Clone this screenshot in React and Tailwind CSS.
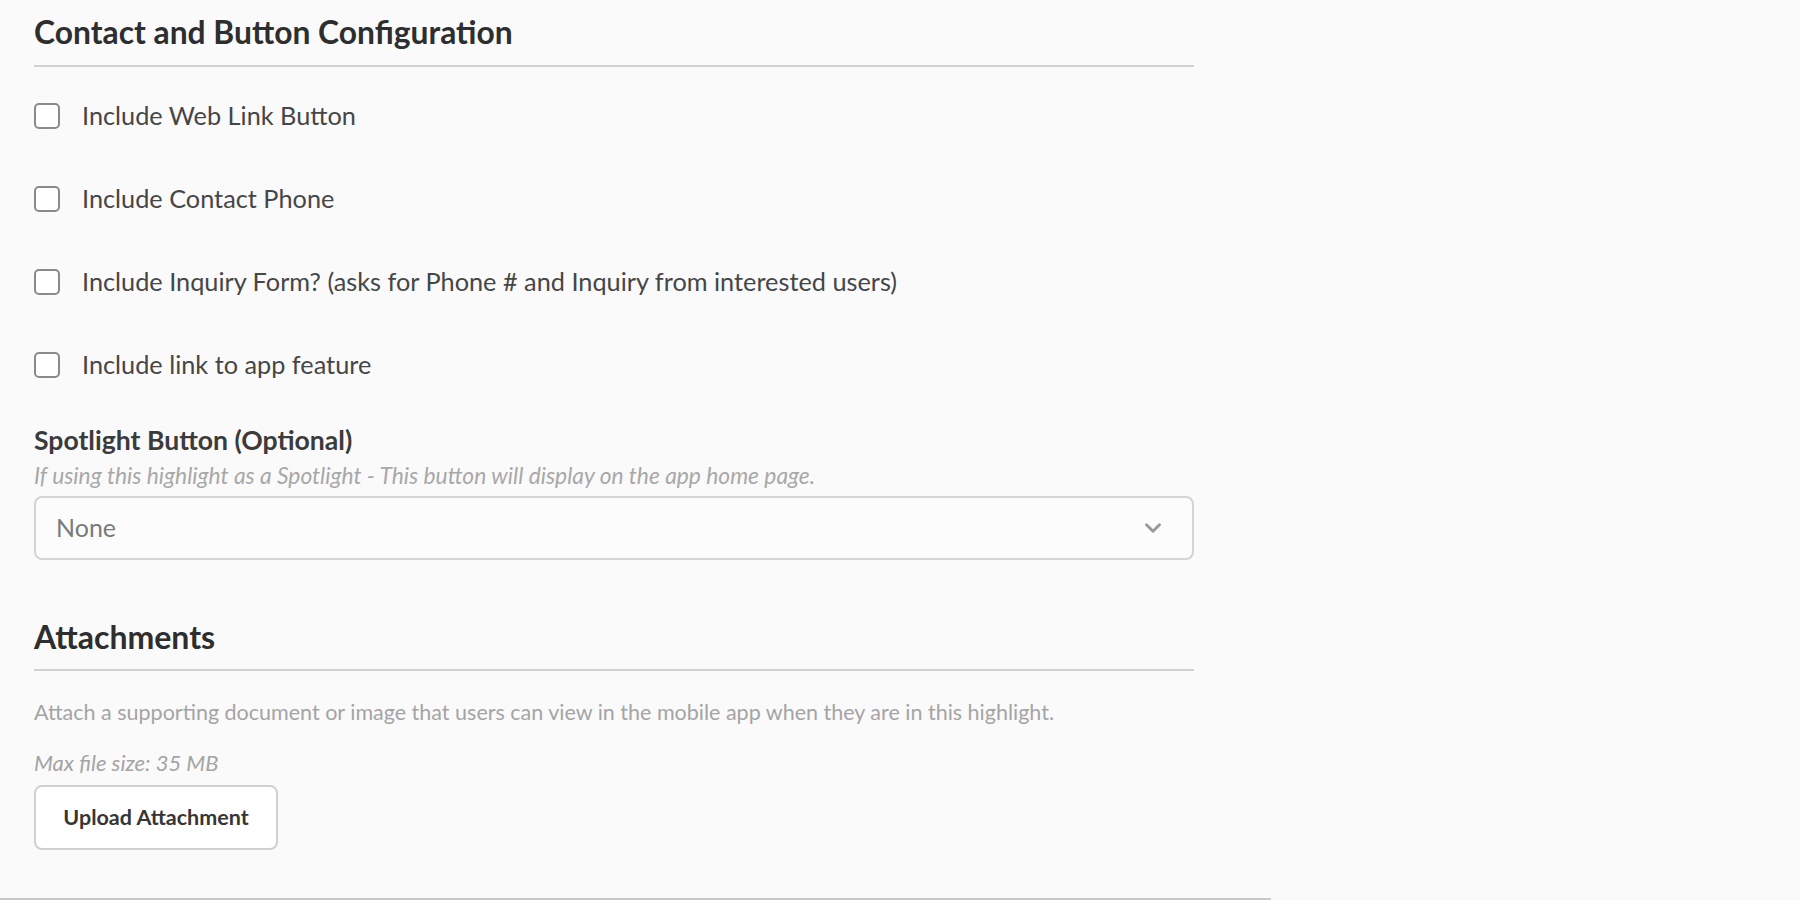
import { ChevronDown } from 'lucide-react';

const options = [
  'Include Web Link Button',
  'Include Contact Phone',
  'Include Inquiry Form? (asks for Phone # and Inquiry from interested users)',
  'Include link to app feature',
];

function CheckRow({ label }) {
  return (
    <label className="flex items-center h-[83px] gap-[22px] cursor-pointer">
      <span className="w-[26px] h-[26px] rounded-[5px] border-2 border-[#8a8a8a] bg-white flex-shrink-0" />
      <span className="text-[25.3px] text-[#464646]">{label}</span>
    </label>
  );
}

export default function App() {
  return (
    <div className="min-h-screen bg-[#fafafa] font-['Lato',sans-serif]">
      <div className="w-[1271px] h-[900px] border-b-2 border-[#c8c8c8] pl-[34px]">
        <div className="w-[1160px]">
          {/* Contact section */}
          <h2 className="pt-[12px] h-[65px] text-[31.8px] leading-[40px] font-bold text-[#2e2e2e]">Contact and Button Configuration</h2>
          <div className="h-[2px] bg-[#d2d2d2]" />
          <div className="pt-[7px]">
            {options.map((o) => <CheckRow key={o} label={o} />)}
          </div>

          {/* Spotlight */}
          <div className="mt-[18px]">
            <p className="text-[26.6px] font-bold text-[#3b3b3b] leading-[32px]">Spotlight Button (Optional)</p>
            <p className="text-[22.8px] italic text-[#a8a8a8] leading-[28px] mt-[5px]">If using this highlight as a Spotlight - This button will display on the app home page.</p>
            <button className="mt-[7px] w-full h-[64px] rounded-[8px] border-2 border-[#d4d4d4] bg-[#fcfcfc] flex items-center justify-between pl-[20px] pr-[26px]">
              <span className="text-[25px] text-[#7a7a7a]">None</span>
              <ChevronDown className="w-[26px] h-[26px] text-[#9a9a9a]" strokeWidth={2.75} />
            </button>
          </div>

          {/* Attachments */}
          <h2 className="mt-[58px] text-[32px] font-bold text-[#2e2e2e] leading-[38px]">Attachments</h2>
          <div className="mt-[13px] h-[2px] bg-[#d2d2d2]" />
          <p className="mt-[27px] text-[21.5px] text-[#a4a4a4] leading-[28px]">Attach a supporting document or image that users can view in the mobile app when they are in this highlight.</p>
          <p className="mt-[23px] text-[22px] italic text-[#a4a4a4] leading-[28px]">Max file size: 35 MB</p>
          <button className="mt-[8px] w-[244px] h-[65px] rounded-[8px] border-2 border-[#d0d0d0] bg-white text-[21.5px] font-bold text-[#363636]">Upload Attachment</button>
        </div>
      </div>
    </div>
  );
}
